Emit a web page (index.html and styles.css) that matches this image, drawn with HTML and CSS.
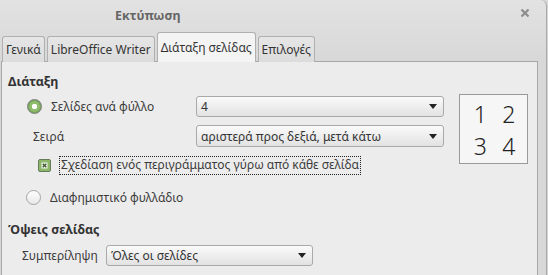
FILE: index.html
```html
<html lang="el">
<head>
    <meta charset="UTF-8">
    <title>Εκτύπωση</title>
    <link rel="stylesheet" href="styles.css">
</head>
<body>
    <div class="window">
        <div class="titlebar">
            <div class="title">Εκτύπωση</div>
            <div class="close">
                <svg width="10" height="10" viewBox="0 0 10 10"><path d="M1.5 1.5 L8.5 8.5 M8.5 1.5 L1.5 8.5" stroke="#8c8c8c" stroke-width="2.2"/></svg>
            </div>
        </div>
        <div class="tabs">
            <div class="tab">Γενικά</div>
            <div class="tab">LibreOffice Writer</div>
            <div class="tab active">Διάταξη σελίδας</div>
            <div class="tab">Επιλογές</div>
        </div>
        <div class="panel">
            <div class="heading">Διάταξη</div>
            <div class="layout">
                <div class="fields">
                    <div class="row row-first">
                        <div class="label label-radio">
                            <span class="radio checked"></span>
                            <span>Σελίδες ανά φύλλο</span>
                        </div>
                        <div class="combo wide"><span>4</span><i class="arrow"></i></div>
                    </div>
                    <div class="row row-order">
                        <div class="label label-plain">Σειρά</div>
                        <div class="combo wide"><span>αριστερά προς δεξιά, μετά κάτω</span><i class="arrow"></i></div>
                    </div>
                    <div class="row row-check">
                        <span class="check">
                            <svg width="13" height="13" viewBox="0 0 13 13">
                                <rect x="0.5" y="0.5" width="12" height="12" rx="1.5" fill="#8db86a" stroke="#657a58"/>
                                <rect x="3.5" y="3.5" width="6" height="6" fill="#f4f7f0"/>
                                <path d="M4.7 4.7 L8.3 8.3 M8.3 4.7 L4.7 8.3" stroke="#3f5a33" stroke-width="1.4"/>
                            </svg>
                        </span>
                        <span class="focus">Σχεδίαση ενός περιγράμματος γύρω από κάθε σελίδα</span>
                    </div>
                </div>
                <div class="preview">
                    <span>1</span><span>2</span><span>3</span><span>4</span>
                </div>
            </div>
            <div class="row row-brochure">
                <span class="radio"></span>
                <span>Διαφημιστικό φυλλάδιο</span>
            </div>
            <div class="heading heading-sides">Όψεις σελίδας</div>
            <div class="row row-include">
                <div class="label label-include">Συμπερίληψη</div>
                <div class="combo narrow"><span>Όλες οι σελίδες</span><i class="arrow"></i></div>
            </div>
        </div>
    </div>
</body>
</html>
```

FILE: styles.css
```css
/* Dialogue d'impression */
body {
    margin: 0;
    padding: 0;
    width: 548px;
    height: 275px;
    overflow: hidden;
    background: #d6d6d6;
    font-family: "Noto Sans", "DejaVu Sans", sans-serif;
    font-size: 12px;
    color: #3c3c3c;
}
.window {
    width: 546px;
    height: 275px;
    background: linear-gradient(#e2e2e2, #d8d8d8 60px);
    border-right: 1px solid #a9a9a9;
    border-top-right-radius: 6px;
    display: flex;
    flex-direction: column;
}
.titlebar {
    height: 30px;
    display: flex;
    align-items: center;
    padding-left: 115px;
    padding-right: 16px;
}
.title {
    flex: 1;
    font-weight: bold;
    color: #666;
    font-size: 12.5px;
}
.close {
    display: flex;
    padding-bottom: 4px;
}
.tabs {
    height: 32px;
    display: flex;
    align-items: flex-end;
    padding-left: 2px;
    gap: 2px;
    position: relative;
    z-index: 1;
    margin-bottom: -1px;
}
.tab {
    height: 25px;
    padding: 0 3px;
    display: flex;
    align-items: center;
    background: linear-gradient(#e6e6e6, #dcdcdc);
    border: 1px solid #b0b0b0;
    border-bottom: none;
    border-radius: 3px 3px 0 0;
    color: #333;
}
.tab.active {
    height: 29px;
    background: #f4f4f4;
    padding: 0 3px;
}
.panel {
    flex: 1;
    margin-left: 1px;
    margin-right: 8px;
    background: #ececec;
    border: 1px solid #a8a8a8;
    border-bottom: none;
    padding: 10px 0 0 6px;
}
.heading {
    font-weight: bold;
    color: #333;
    height: 20px;
    line-height: 20px;
    font-size: 12.5px;
}
.heading-sides {
    margin-top: 13px;
}
.layout {
    display: flex;
}
.fields {
    width: 444px;
}
.row {
    display: flex;
    align-items: center;
}
.row-first {
    margin-top: 4px;
    height: 21px;
}
.row-order {
    margin-top: 8px;
    height: 22px;
}
.row-check {
    margin-top: 9px;
    height: 19px;
    padding-left: 30px;
}
.row-brochure {
    margin-top: 12px;
    height: 20px;
    padding-left: 18px;
    gap: 9px;
}
.row-include {
    margin-top: 5px;
    height: 21px;
}
.label {
    width: 188px;
    box-sizing: border-box;
    display: flex;
    align-items: center;
}
.label-radio {
    padding-left: 19px;
    gap: 9px;
}
.label-plain {
    padding-left: 25px;
}
.label-include {
    width: 98px;
    padding-left: 14px;
}
.radio {
    width: 13px;
    height: 13px;
    border-radius: 50%;
    border: 1px solid #a6a6a6;
    background: linear-gradient(#ffffff, #e8e8e8);
    flex: none;
}
.radio.checked {
    border-color: #7c7c7c;
    background: radial-gradient(circle, #ffffff 0 2.5px, #8fbd6c 3px 5px, #7aa65a 5.5px);
}
.check {
    display: flex;
    margin-right: 8px;
}
.focus {
    border: 1px dotted #222;
    padding: 0 1px 1px 1px;
    line-height: 16px;
}
.combo {
    height: 21px;
    box-sizing: border-box;
    border: 1px solid #a9a9a9;
    border-radius: 3px;
    background: linear-gradient(#fafafa, #e2e2e2);
    box-shadow: 0 1px 0 #fbfbfb inset;
    display: flex;
    align-items: center;
    padding-left: 4px;
    padding-right: 6px;
    color: #333;
}
.combo span {
    flex: 1;
}
.combo.wide {
    width: 248px;
}
.row-order .combo {
    height: 22px;
}
.combo.narrow {
    width: 207px;
}
.arrow {
    width: 0;
    height: 0;
    border-left: 4.5px solid transparent;
    border-right: 4.5px solid transparent;
    border-top: 5px solid #222;
}
.preview {
    margin-left: 7px;
    margin-top: 2px;
    width: 69px;
    height: 70px;
    box-sizing: border-box;
    border: 1px solid #9a9a9a;
    background: #f6f6f6;
    display: grid;
    grid-template-columns: 1fr 1fr;
    align-items: center;
    justify-items: center;
    padding: 3px 4px 2px 6px;
    font-size: 23px;
    font-weight: 300;
    color: #222;
}
```
